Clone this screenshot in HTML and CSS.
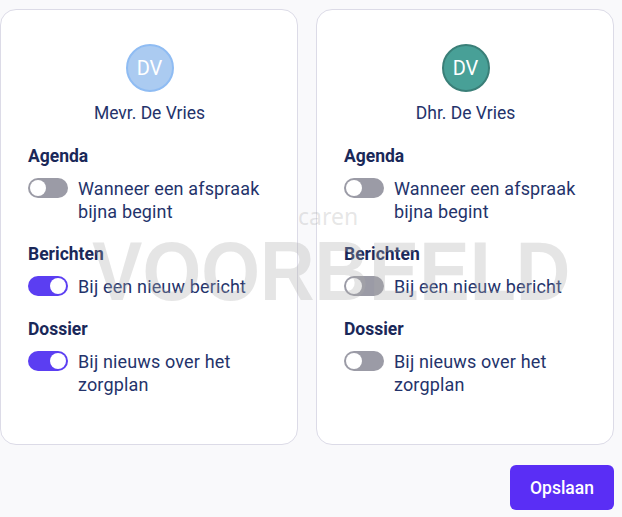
FILE: index.html
```html
<!DOCTYPE html>
<html lang="nl">
<head>
<meta charset="utf-8">
<link rel="stylesheet" href="styles.css">
</head>
<body>
<div class="page">
  <div class="cards">
    <section class="card">
      <div class="person">
        <div class="avatar avatar-blue">DV</div>
        <div class="name">Mevr. De Vries</div>
      </div>
      <div class="group">
        <h3 class="group-title">Agenda</h3>
        <div class="option"><span class="toggle"></span><span class="label">Wanneer een afspraak bijna begint</span></div>
      </div>
      <div class="group">
        <h3 class="group-title">Berichten</h3>
        <div class="option"><span class="toggle on"></span><span class="label">Bij een nieuw bericht</span></div>
      </div>
      <div class="group">
        <h3 class="group-title">Dossier</h3>
        <div class="option"><span class="toggle on"></span><span class="label">Bij nieuws over het zorgplan</span></div>
      </div>
    </section>
    <section class="card">
      <div class="person">
        <div class="avatar avatar-teal">DV</div>
        <div class="name">Dhr. De Vries</div>
      </div>
      <div class="group">
        <h3 class="group-title">Agenda</h3>
        <div class="option"><span class="toggle"></span><span class="label">Wanneer een afspraak bijna begint</span></div>
      </div>
      <div class="group">
        <h3 class="group-title">Berichten</h3>
        <div class="option"><span class="toggle"></span><span class="label">Bij een nieuw bericht</span></div>
      </div>
      <div class="group">
        <h3 class="group-title">Dossier</h3>
        <div class="option"><span class="toggle"></span><span class="label">Bij nieuws over het zorgplan</span></div>
      </div>
    </section>
  </div>
  <div class="actions">
    <button class="save">Opslaan</button>
  </div>
  <div class="watermark">
    <span class="wm-logo">caren</span>
    <span class="wm-text">VOORBEELD</span>
  </div>
</div>
</body>
</html>
```

FILE: styles.css
```css
* { box-sizing: border-box; }
html, body { margin: 0; padding: 0; }
body {
  background: #f9f9fb;
  font-family: "Roboto", "Noto Sans", sans-serif;
  color: #24336b;
}
.page {
  position: relative;
  width: 622px;
  height: 517px;
  padding-top: 9px;
}
.cards {
  display: grid;
  grid-template-columns: 298px 298px;
  column-gap: 18px;
  width: 614px;
}
.card {
  background: #fff;
  border: 1px solid #dcdbe7;
  border-radius: 16px;
  padding: 34px 18px 48px 27px;
}
.person {
  display: flex;
  flex-direction: column;
  align-items: center;
  margin-left: -8px;
  margin-bottom: 20px;
}
.avatar {
  width: 48px;
  height: 48px;
  border-radius: 50%;
  display: flex;
  align-items: center;
  justify-content: center;
  color: #fff;
  font-size: 20px;
}
.avatar-blue { background: #abcbf1; border: 2px solid #8fbcf3; }
.avatar-teal { background: #48a097; border: 2px solid #3a7f78; }
.name {
  margin-top: 10px;
  font-size: 17.5px;
  line-height: 23px;
  color: #24336b;
}
.group { margin-bottom: 20px; }
.group:last-child { margin-bottom: 0; }
.group-title {
  margin: 0 0 10px;
  font-size: 17.5px;
  font-weight: 700;
  line-height: 22px;
  color: #1a2859;
}
.option {
  display: flex;
  align-items: flex-start;
  gap: 10px;
}
.toggle {
  flex: none;
  position: relative;
  width: 40px;
  height: 20px;
  border-radius: 10px;
  background: #9b9ba6;
  margin-top: 1px;
}
.toggle::after {
  content: "";
  position: absolute;
  top: 2px;
  left: 2px;
  width: 16px;
  height: 16px;
  border-radius: 50%;
  background: #fff;
}
.toggle.on { background: #5b3ef2; }
.toggle.on::after { left: 22px; }
.label {
  font-size: 18px;
  letter-spacing: 0.15px;
  line-height: 23px;
  color: #24336b;
}
.actions {
  display: flex;
  justify-content: flex-end;
  width: 614px;
  padding-top: 20px;
}
.save {
  width: 104px;
  height: 45px;
  border: none;
  border-radius: 6px;
  background: #5a2ef5;
  color: #fff;
  font-family: inherit;
  font-size: 17.5px;
  font-weight: 500;
}
.watermark {
  position: absolute;
  left: 0;
  top: 0;
  width: 622px;
  height: 517px;
  pointer-events: none;
}
.wm-logo {
  position: absolute;
  left: 298px;
  top: 200px;
  font-size: 23px;
  color: rgba(170, 170, 170, 0.3);
  font-family: "Noto Sans", sans-serif;
}
.wm-text {
  position: absolute;
  left: 92px;
  top: 222px;
  font-family: "Liberation Sans", sans-serif;
  font-weight: 700;
  font-size: 83px;
  line-height: 100px;
  color: rgba(172, 172, 172, 0.31);
  transform-origin: left center;
  transform: scaleX(0.91);
  white-space: nowrap;
}
```
